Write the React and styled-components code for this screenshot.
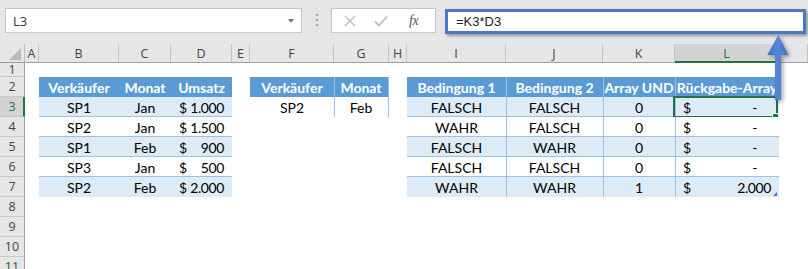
import React from 'react';
import styled, { createGlobalStyle, css } from 'styled-components';

const GlobalStyle = createGlobalStyle`
  html, body { margin: 0; padding: 0; background: #ffffff; }
  body { font-family: Lato, "Liberation Sans", Arial, sans-serif; }
`;

const COLS = [
  { key: 'A', w: 14 }, { key: 'B', w: 80 }, { key: 'C', w: 52 }, { key: 'D', w: 61 },
  { key: 'E', w: 18 }, { key: 'F', w: 84 }, { key: 'G', w: 55 }, { key: 'H', w: 18 },
  { key: 'I', w: 99 }, { key: 'J', w: 97 }, { key: 'K', w: 72 }, { key: 'L', w: 104 },
  { key: '', w: 29 },
];
const ROWS = [14, 20, 20, 20, 20, 20, 20, 20, 20, 20, 20];

const GREEN = '#217346';
const LINE = '#9bc2e6';

const Frame = styled.div`
  position: relative;
  width: 808px;
  height: 269px;
  overflow: hidden;
  background: #fff;
`;

const Toolbar = styled.div`
  height: 44px;
  box-sizing: border-box;
  background: #e6e6e6;
  display: flex;
  align-items: flex-start;
  padding: 8px 0 0 5px;
`;

const NameBox = styled.div`
  box-sizing: border-box;
  width: 297px;
  height: 25px;
  background: #fff;
  border: 1px solid #c6c6c6;
  display: flex;
  align-items: center;
  justify-content: space-between;
  padding: 0 7px 0 7px;
  font-family: "Open Sans", "Liberation Sans", sans-serif;
  font-size: 13px;
  color: #333;
`;

const DropTriangle = styled.span`
  width: 0;
  height: 0;
  border-left: 3.5px solid transparent;
  border-right: 3.5px solid transparent;
  border-top: 4px solid #777;
  margin-top: 1px;
`;

const Grip = styled.div`
  width: 2px;
  margin: 6px 13px 0 14px;
  display: flex;
  flex-direction: column;
  gap: 3px;
  & > span {
    width: 2px;
    height: 2px;
    background: #a0a0a0;
  }
`;

const FuncBox = styled.div`
  box-sizing: border-box;
  width: 105px;
  height: 25px;
  background: #fff;
  border: 1px solid #c6c6c6;
  display: flex;
  align-items: center;
  padding-left: 12px;
  gap: 18px;
`;

const FxLabel = styled.span`
  font-family: "Liberation Serif", "DejaVu Serif", serif;
  font-style: italic;
  font-size: 14px;
  color: #555;
  letter-spacing: -0.5px;
  margin-left: 3px;
`;

const FormulaBox = styled.div`
  box-sizing: border-box;
  margin: 1px 0 0 9px;
  width: 361px;
  height: 25px;
  background: #fff;
  border: 3px solid #4a77c7;
  box-shadow: 2px 2px 3px rgba(0, 0, 0, 0.35);
  display: flex;
  align-items: center;
  padding-left: 8px;
  font-family: "Liberation Sans", Arial, sans-serif;
  font-size: 13px;
  color: #222;
`;

const Sheet = styled.div`
  display: grid;
  grid-template-columns: 25px ${COLS.map((c) => `${c.w}px`).join(' ')};
  grid-template-rows: 19px ${ROWS.map((r) => `${r}px`).join(' ')};
`;

const headFont = css`
  font-family: "Open Sans", "Liberation Sans", sans-serif;
  font-size: 12.5px;
  color: #444;
`;

const Corner = styled.div`
  box-sizing: border-box;
  background: #e6e6e6;
  border-right: 1px solid #bdbdbd;
  border-bottom: 1px solid #9f9f9f;
  display: flex;
  align-items: flex-end;
  justify-content: flex-end;
  padding: 0 3px 2px 0;
  &::after {
    content: '';
    width: 0;
    height: 0;
    border-left: 12px solid transparent;
    border-bottom: 12px solid #b9b9b9;
  }
`;

const ColHead = styled.div`
  ${headFont}
  box-sizing: border-box;
  background: ${(p) => (p.$active ? '#d3d3d3' : '#e6e6e6')};
  color: ${(p) => (p.$active ? GREEN : '#444')};
  border-right: 1px solid #c3c3c3;
  border-bottom: ${(p) => (p.$active ? `2px solid ${GREEN}` : '1px solid #9f9f9f')};
  display: flex;
  align-items: center;
  justify-content: center;
  padding-top: 1px;
  overflow: hidden;
`;

const RowHead = styled.div`
  ${headFont}
  box-sizing: border-box;
  grid-column: 1;
  background: ${(p) => (p.$active ? '#d3d3d3' : '#e6e6e6')};
  color: ${(p) => (p.$active ? GREEN : '#444')};
  border-right: ${(p) => (p.$active ? `2px solid ${GREEN}` : '1px solid #9f9f9f')};
  border-bottom: 1px solid #c8c8c8;
  display: flex;
  align-items: center;
  justify-content: center;
  padding-left: ${(p) => (p.$active ? '1px' : '0')};
`;

const Table = styled.div`
  grid-column: ${(p) => p.$col};
  grid-row: ${(p) => p.$row};
  display: grid;
  grid-template-columns: ${(p) => p.$widths.map((w) => `${w}px`).join(' ')};
  grid-auto-rows: 20px;
  outline: 1px solid ${LINE};
  outline-offset: -1px;
`;

const Cell = styled.div`
  position: relative;
  box-sizing: border-box;
  height: 20px;
  display: flex;
  align-items: flex-start;
  justify-content: ${(p) => (p.$acct ? 'space-between' : 'center')};
  padding-left: ${(p) => p.$pl || 0}px;
  padding-right: ${(p) => p.$pr || 0}px;
  line-height: 21px;
  font-size: 14px;
  white-space: nowrap;
  overflow: ${(p) => (p.$selected ? 'visible' : 'hidden')};
  background: ${(p) => (p.$head ? '#5b9bd5' : p.$band ? '#ddebf7' : '#ffffff')};
  color: ${(p) => (p.$head ? '#ffffff' : '#000000')};
  font-weight: ${(p) => (p.$head ? 700 : 400)};
  box-shadow: ${(p) =>
    [p.$divider ? `inset 1px 0 0 ${LINE}` : null, p.$line ? `inset 0 -1px 0 ${LINE}` : null]
      .filter(Boolean)
      .join(', ') || 'none'};
  ${(p) =>
    p.$resize &&
    css`
      &::after {
        content: '';
        position: absolute;
        right: 2px;
        bottom: 1px;
        width: 0;
        height: 0;
        border-left: 4px solid transparent;
        border-bottom: 4px solid #4472c4;
      }
    `}
`;

const Num = styled.span`
  letter-spacing: -0.4px;
`;

const Selection = styled.div`
  position: absolute;
  left: -2px;
  top: -1px;
  right: 1px;
  bottom: -1px;
  border: 2px solid ${GREEN};
  pointer-events: none;
`;

const FillHandle = styled.div`
  position: absolute;
  right: -3px;
  bottom: -4px;
  width: 5px;
  height: 5px;
  background: ${GREEN};
  border: 1px solid #fff;
`;

const Arrow = styled.svg`
  position: absolute;
  left: 762px;
  top: 32px;
  filter: drop-shadow(2px 2px 2px rgba(0, 0, 0, 0.35));
`;

const XIcon = () => (
  <svg width="12" height="12" viewBox="0 0 12 12">
    <path d="M1 1 L11 11 M11 1 L1 11" stroke="#bdbdbd" strokeWidth="1.4" fill="none" />
  </svg>
);

const CheckIcon = () => (
  <svg width="14" height="12" viewBox="0 0 14 12">
    <path d="M1 6.5 L5 10.5 L13 1.5" stroke="#bdbdbd" strokeWidth="1.8" fill="none" />
  </svg>
);

const Acct = ({ value }) => (
  <>
    <span>$</span>
    <Num>{value}</Num>
  </>
);

const t1 = [
  ['SP1', 'Jan', '1.000'],
  ['SP2', 'Jan', '1.500'],
  ['SP1', 'Feb', '900'],
  ['SP3', 'Jan', '500'],
  ['SP2', 'Feb', '2.000'],
];

const t3 = [
  ['FALSCH', 'FALSCH', '0', '-'],
  ['WAHR', 'FALSCH', '0', '-'],
  ['FALSCH', 'WAHR', '0', '-'],
  ['FALSCH', 'FALSCH', '0', '-'],
  ['WAHR', 'WAHR', '1', '2.000'],
];

export default function App() {
  return (
    <Frame>
      <GlobalStyle />
      <Toolbar>
        <NameBox>
          <span>L3</span>
          <DropTriangle />
        </NameBox>
        <Grip>
          <span />
          <span />
          <span />
        </Grip>
        <FuncBox>
          <XIcon />
          <CheckIcon />
          <FxLabel>fx</FxLabel>
        </FuncBox>
        <FormulaBox>=K3*D3</FormulaBox>
      </Toolbar>

      <Sheet>
        <Corner />
        {COLS.map((c, i) => (
          <ColHead key={i} $active={c.key === 'L'}>
            {c.key}
          </ColHead>
        ))}
        {ROWS.map((h, i) => (
          <RowHead key={i} style={{ gridRow: i + 2 }} $active={i + 1 === 3}>
            {i + 1}
          </RowHead>
        ))}

        <Table $col="3 / 6" $row="3 / 9" $widths={[80, 52, 61]}>
          <Cell $head>Verkäufer</Cell>
          <Cell $head>Monat</Cell>
          <Cell $head>Umsatz</Cell>
          {t1.map((r, i) => {
            const band = i % 2 === 0;
            const line = i < t1.length - 1;
            return (
              <React.Fragment key={i}>
                <Cell $band={band} $line={line}>{r[0]}</Cell>
                <Cell $band={band} $line={line}>{r[1]}</Cell>
                <Cell $band={band} $line={line} $acct $pl={8} $pr={8}>
                  <Acct value={r[2]} />
                </Cell>
              </React.Fragment>
            );
          })}
        </Table>

        <Table $col="7 / 9" $row="3 / 5" $widths={[84, 54]}>
          <Cell $head>Verkäufer</Cell>
          <Cell $head $divider>Monat</Cell>
          <Cell>SP2</Cell>
          <Cell $divider>Feb</Cell>
        </Table>

        <Table $col="10 / 14" $row="3 / 9" $widths={[99, 97, 72, 104]}>
          <Cell $head>Bedingung 1</Cell>
          <Cell $head $divider>Bedingung 2</Cell>
          <Cell $head $divider>Array UND</Cell>
          <Cell $head $divider>Rückgabe-Array</Cell>
          {t3.map((r, i) => {
            const band = i % 2 === 0;
            const line = i < t3.length - 1;
            const dash = r[3] === '-';
            return (
              <React.Fragment key={i}>
                <Cell $band={band} $line={line}>{r[0]}</Cell>
                <Cell $band={band} $line={line} $divider>{r[1]}</Cell>
                <Cell $band={band} $line={line} $divider>{r[2]}</Cell>
                <Cell
                  $band={band}
                  $line={line}
                  $divider
                  $acct
                  $pl={8}
                  $pr={dash ? 22 : 8}
                  $selected={i === 0}
                  $resize={i === t3.length - 1}
                >
                  <Acct value={r[3]} />
                  {i === 0 && (
                    <Selection>
                      <FillHandle />
                    </Selection>
                  )}
                </Cell>
              </React.Fragment>
            );
          })}
        </Table>
      </Sheet>

      <Arrow width="32" height="72" viewBox="0 0 32 72">
        <defs>
          <linearGradient id="arrowFill" x1="0" y1="0" x2="1" y2="0">
            <stop offset="0" stopColor="#4674c4" />
            <stop offset="0.5" stopColor="#5585d6" />
            <stop offset="1" stopColor="#4674c4" />
          </linearGradient>
        </defs>
        <path d="M16.3 3 L26.5 23 L19 23 L19 68 L13 68 L13 23 L5.3 23 Z" fill="url(#arrowFill)" />
      </Arrow>
    </Frame>
  );
}
